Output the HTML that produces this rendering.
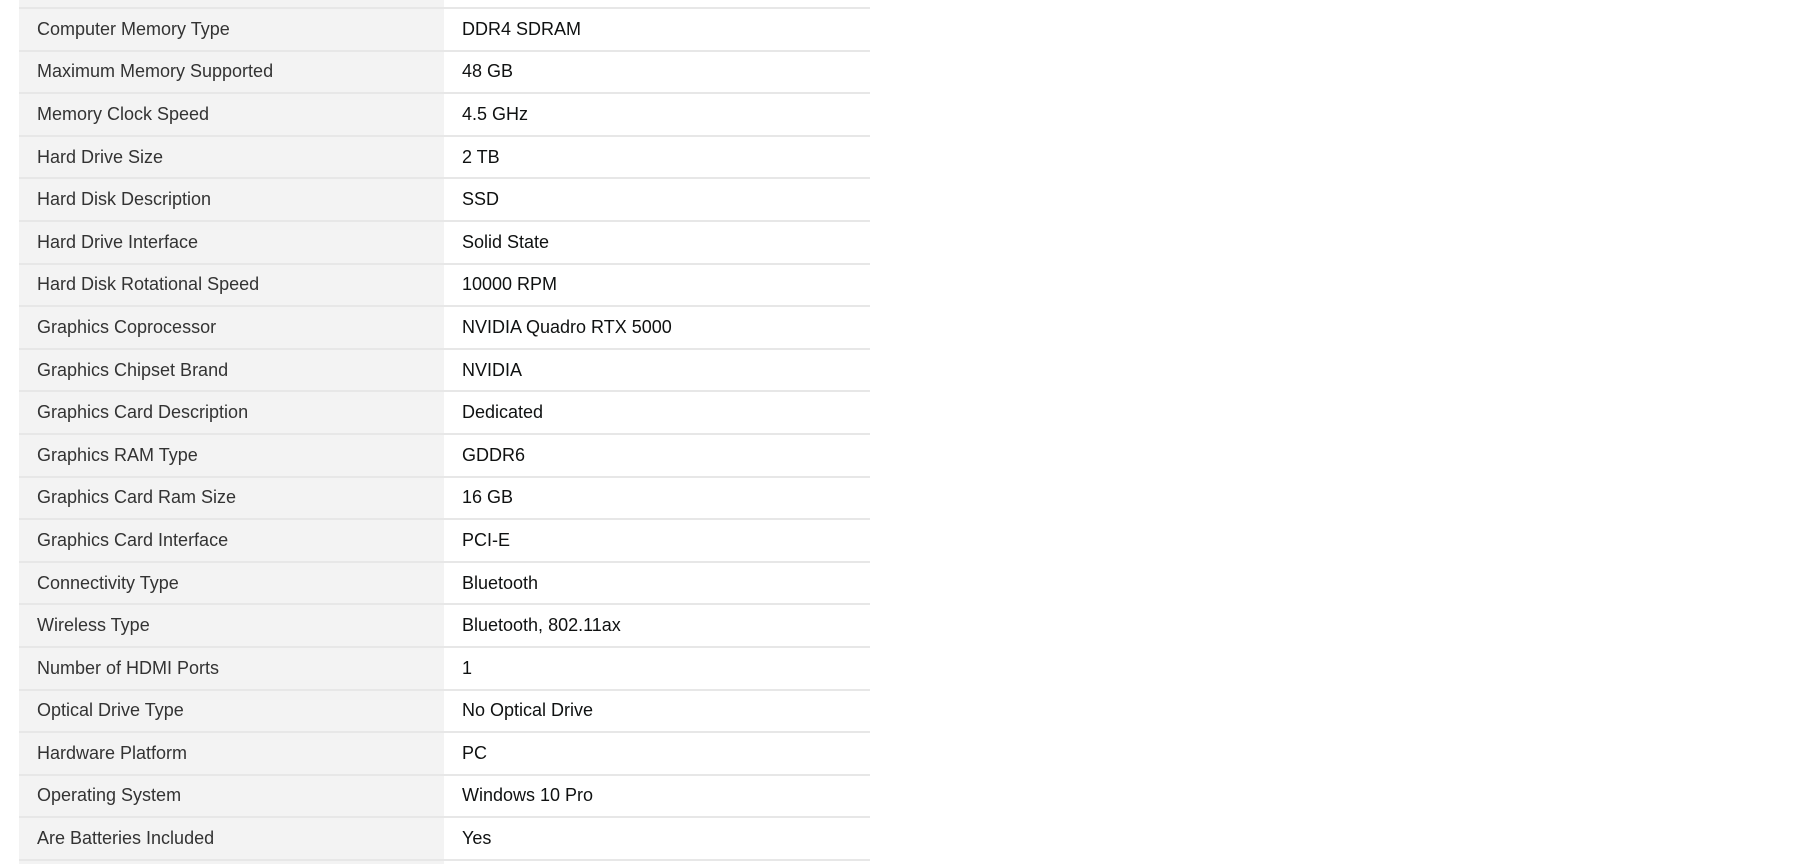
<!DOCTYPE html>
<html><head><style>
html,body{margin:0;padding:0;background:#fff;width:1805px;height:864px;overflow:hidden}
table{position:absolute;left:19px;top:7px;width:851px;border-collapse:collapse;table-layout:fixed;font-family:"Liberation Sans",sans-serif;font-size:18px;color:#0f1111}
td{height:40.6px;border-top:2px solid #e7e7e7;padding:0;vertical-align:middle;white-space:nowrap}
td.l{background:#f3f3f3;padding-left:18px;color:#333}
td.v{padding-left:18px}
tr.last td{height:3px}
</style></head><body>
<table>
<colgroup><col style="width:425px"><col style="width:426px"></colgroup>
<tr><td class="l">Computer Memory Type</td><td class="v">DDR4 SDRAM</td></tr>
<tr><td class="l">Maximum Memory Supported</td><td class="v">48 GB</td></tr>
<tr><td class="l">Memory Clock Speed</td><td class="v">4.5 GHz</td></tr>
<tr><td class="l">Hard Drive Size</td><td class="v">2 TB</td></tr>
<tr><td class="l">Hard Disk Description</td><td class="v">SSD</td></tr>
<tr><td class="l">Hard Drive Interface</td><td class="v">Solid State</td></tr>
<tr><td class="l">Hard Disk Rotational Speed</td><td class="v">10000 RPM</td></tr>
<tr><td class="l">Graphics Coprocessor</td><td class="v">NVIDIA Quadro RTX 5000</td></tr>
<tr><td class="l">Graphics Chipset Brand</td><td class="v">NVIDIA</td></tr>
<tr><td class="l">Graphics Card Description</td><td class="v">Dedicated</td></tr>
<tr><td class="l">Graphics RAM Type</td><td class="v">GDDR6</td></tr>
<tr><td class="l">Graphics Card Ram Size</td><td class="v">16 GB</td></tr>
<tr><td class="l">Graphics Card Interface</td><td class="v">PCI-E</td></tr>
<tr><td class="l">Connectivity Type</td><td class="v">Bluetooth</td></tr>
<tr><td class="l">Wireless Type</td><td class="v">Bluetooth, 802.11ax</td></tr>
<tr><td class="l">Number of HDMI Ports</td><td class="v">1</td></tr>
<tr><td class="l">Optical Drive Type</td><td class="v">No Optical Drive</td></tr>
<tr><td class="l">Hardware Platform</td><td class="v">PC</td></tr>
<tr><td class="l">Operating System</td><td class="v">Windows 10 Pro</td></tr>
<tr><td class="l">Are Batteries Included</td><td class="v">Yes</td></tr>
<tr class="last"><td class="l"></td><td class="v"></td></tr>
</table>
<div style="position:absolute;left:19px;top:0;width:425px;height:7px;background:#f3f3f3"></div>
</body></html>
